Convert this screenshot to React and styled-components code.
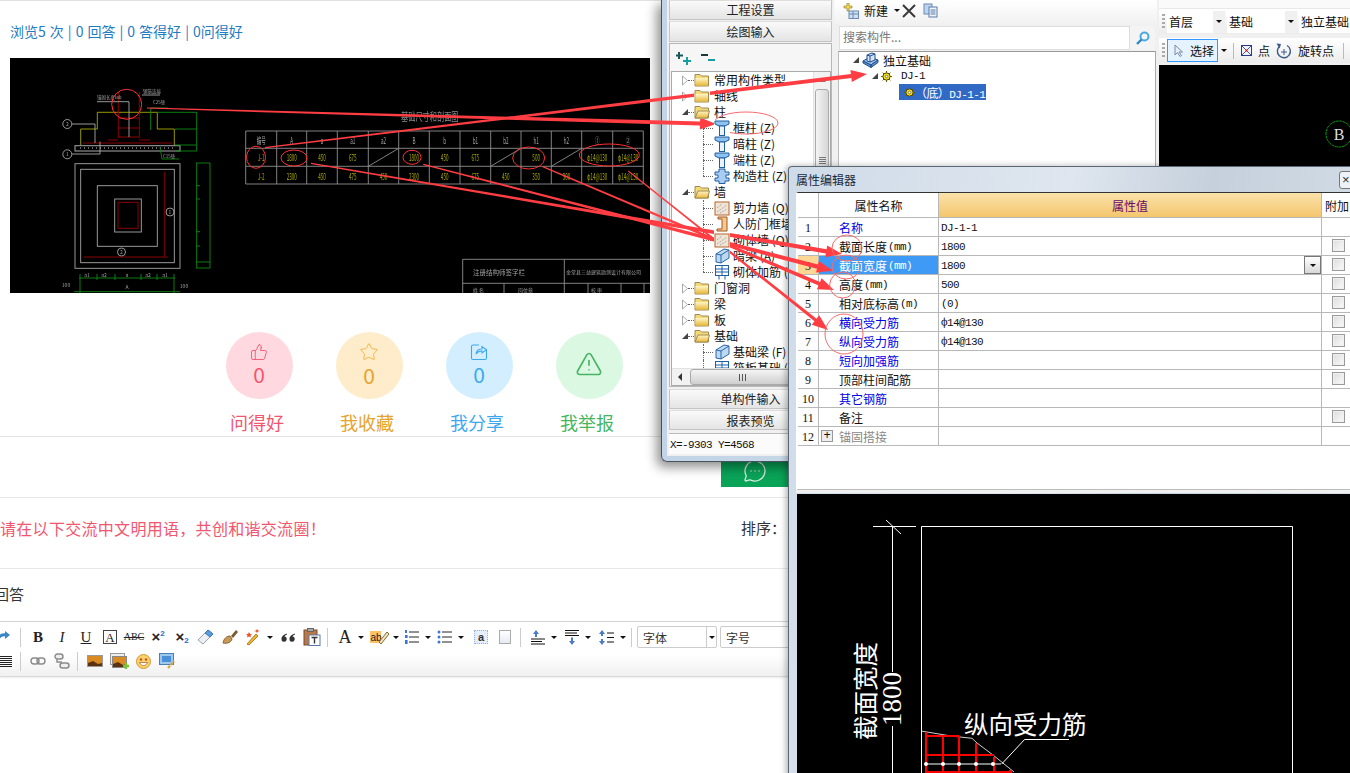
import React from 'react'
import styled, { createGlobalStyle } from 'styled-components'
import { ThumbsUp, Star, TriangleAlert, MessageCircleMore } from 'lucide-react'

const CJK = `"Noto Sans CJK SC", "Liberation Sans", sans-serif`
const OLD = `"Liberation Serif", "Noto Sans CJK SC", serif`
const MONO = `"Liberation Mono", "Noto Sans CJK SC", monospace`

const GlobalStyle = createGlobalStyle`
    html, body { margin: 0; padding: 0; background: #fff; }
    * { box-sizing: border-box; }
`

/* ---------- data ---------- */

const COLS = [245.7, 276.7, 306.7, 337.3, 368.3, 398.7, 429.3, 460, 490.7, 521, 551.3, 581.7, 612.7, 643.3]
const HEAD = ['编号', 'A', 'a', 'a1', 'a2', 'B', 'b', 'b1', 'b2', 'h1', 'h2', '①', '②']
const ROW_A = ['J-1', '1800', '450', '675', '', '1800', '450', '675', '', '500', '', 'φ14@130', 'φ14@130']
const ROW_B = ['J-2', '2300', '450', '475', '450', '2300', '450', '675', '450', '350', '300', 'φ14@130', 'φ14@130']

const ACTIONS = [
    { label: '问得好', count: '0', color: '#f2566f', bg: '#ffd9df', icon: 'like' },
    { label: '我收藏', count: '0', color: '#e6a32e', bg: '#ffeccb', icon: 'star' },
    { label: '我分享', count: '0', color: '#3ea8ef', bg: '#d3efff', icon: 'share' },
    { label: '我举报', color: '#46b562', bg: '#dbf8e3', icon: 'warn' },
]

const TREE = [
    { label: '常用构件类型', icon: 'folder' },
    { label: '轴线', icon: 'folder' },
    { label: '柱', icon: 'open' },
    { label: '框柱 (Z)', icon: 'column', child: true },
    { label: '暗柱 (Z)', icon: 'column', child: true },
    { label: '端柱 (Z)', icon: 'column', child: true },
    { label: '构造柱 (Z)', icon: 'puzzle', child: true, last: true },
    { label: '墙', icon: 'open' },
    { label: '剪力墙 (Q)', icon: 'wall', child: true },
    { label: '人防门框墙', icon: 'door', child: true },
    { label: '砌体墙 (Q)', icon: 'wall', child: true },
    { label: '暗梁 (A)', icon: 'beam', child: true },
    { label: '砌体加筋 (Y)', icon: 'rebar', child: true, last: true },
    { label: '门窗洞', icon: 'folder' },
    { label: '梁', icon: 'folder' },
    { label: '板', icon: 'folder' },
    { label: '基础', icon: 'open' },
    { label: '基础梁 (F)', icon: 'beam', child: true },
    { label: '筏板基础 (M)', icon: 'rebar', child: true },
]

const PROPS = [
    { n: '1', name: '名称', link: true, value: 'DJ-1-1' },
    { n: '2', name: '截面长度', unit: '(mm)', value: '1800', check: true },
    { n: '3', name: '截面宽度', unit: '(mm)', value: '1800', check: true, selected: true },
    { n: '4', name: '高度', unit: '(mm)', value: '500', check: true },
    { n: '5', name: '相对底标高', unit: '(m)', value: '(0)', check: true },
    { n: '6', name: '横向受力筋', link: true, value: 'ф14@130', check: true },
    { n: '7', name: '纵向受力筋', link: true, value: 'ф14@130', check: true },
    { n: '8', name: '短向加强筋', link: true, check: true },
    { n: '9', name: '顶部柱间配筋', check: true },
    { n: '10', name: '其它钢筋', link: true },
    { n: '11', name: '备注', check: true },
    { n: '12', name: '锚固搭接', muted: true, plus: true },
]

/* tapered arrows: start, tip, start width, end width */
const ARROWS = [
    [147, 108, 716, 124, 1.2, 4.2],
    [265, 147.7, 867, 74, 1.2, 4.2],
    [311, 163.3, 842, 254, 1.2, 4.2],
    [423.3, 164.3, 833, 270.7, 1.2, 4.2],
    [542.7, 166.7, 834, 290, 1.2, 3.6],
    [628.3, 171, 828, 330, 1, 3.2],
]

const RINGS = [
    [746, 123, 32, 11],
    [847, 248, 15, 13],
    [846, 267, 14, 12],
    [842.7, 285, 13, 13],
    [844, 334, 19, 20],
]

function arrowPoints([x1, y1, x2, y2, w1, w2]) {
    const len = Math.hypot(x2 - x1, y2 - y1)
    const dx = (x2 - x1) / len
    const dy = (y2 - y1) / len
    const nx = -dy
    const ny = dx
    const bx = x2 - dx * 16
    const by = y2 - dy * 16
    const pts = [
        [x1 + nx * w1 / 2, y1 + ny * w1 / 2],
        [bx + nx * w2 / 2, by + ny * w2 / 2],
        [bx + nx * 6, by + ny * 6],
        [x2, y2],
        [bx - nx * 6, by - ny * 6],
        [bx - nx * w2 / 2, by - ny * w2 / 2],
        [x1 - nx * w1 / 2, y1 - ny * w1 / 2],
    ]
    return pts.map((p) => p.map((v) => v.toFixed(1)).join(',')).join(' ')
}

/* ---------- small drawings ---------- */

function FolderIcon({ open }) {
    return (
        <svg width="16" height="14" viewBox="0 0 16 14">
            <defs>
                <linearGradient id="fold" x1="0" y1="0" x2="0" y2="1">
                    <stop offset="0" stopColor="#fff6c8" />
                    <stop offset="1" stopColor="#e8b83c" />
                </linearGradient>
            </defs>
            <path d="M1 3 L1 1.5 L6 1.5 L7.5 3 L14.5 3 L14.5 13 L1 13 Z" fill="#f3d97a" stroke="#a08a52" />
            {open
                ? <path d="M1 13 L4 6 L15.5 6 L13.5 13 Z" fill="url(#fold)" stroke="#a08a52" />
                : <rect x="1.5" y="5" width="12.5" height="7.5" fill="url(#fold)" />}
        </svg>
    )
}

function TreeIcon({ kind }) {
    if (kind === 'folder') return <FolderIcon />
    if (kind === 'open') return <FolderIcon open />
    if (kind === 'column') {
        return (
            <svg width="16" height="16" viewBox="0 0 16 16">
                <path d="M1 1 H15 V4 L11 6 H5 L1 4 Z" fill="#8ec2ee" stroke="#1e5fa8" />
                <rect x="5.5" y="6" width="5" height="9.5" fill="#e8f3fc" stroke="#1e5fa8" />
            </svg>
        )
    }
    if (kind === 'puzzle') {
        return (
            <svg width="16" height="16" viewBox="0 0 16 16">
                <path d="M5 1 H11 V4 H15 V7 H12 V10 H15 V13 H11 V15.5 H5 V13 H1 V10 H4 V7 H1 V4 H5 Z" fill="#a9cdf0" stroke="#1e5fa8" />
            </svg>
        )
    }
    if (kind === 'wall') {
        return (
            <svg width="16" height="16" viewBox="0 0 16 16">
                <rect x="1" y="2" width="14" height="13" fill="#efe4d6" stroke="#b4662e" />
                <path d="M3 12 L13 5 M6 13 L13 9 M3 8 L8 4" stroke="#9a9a9a" strokeDasharray="1 1" />
            </svg>
        )
    }
    if (kind === 'door') {
        return (
            <svg width="16" height="16" viewBox="0 0 16 16">
                <path d="M4 1 H13 V15 H3 V13 H8 V3 H4 Z" fill="#f2c98f" stroke="#a8541c" />
            </svg>
        )
    }
    if (kind === 'beam') {
        return (
            <svg width="16" height="16" viewBox="0 0 16 16">
                <path d="M2 6 L10 1 L15 2 L15 10 L7 15 L2 14 Z" fill="#bcd8f2" stroke="#2a66a8" />
                <path d="M2 6 L7 7 L15 2 M7 7 V15" fill="none" stroke="#2a66a8" />
            </svg>
        )
    }
    return (
        <svg width="16" height="16" viewBox="0 0 16 16" fill="none" stroke="#1e5fa8">
            <rect x="1.5" y="1.5" width="13" height="10" />
            <path d="M5 11.5 V15.5 M11 11.5 V15.5 M2 5 H14 M8 2 V11 M2 8 H14" />
        </svg>
    )
}

function Gear() {
    return (
        <svg width="11" height="11" viewBox="0 0 11 11">
            <circle cx="5.5" cy="5.5" r="3.6" fill="#f7e21e" stroke="#4a4200" />
            <path d="M5.5 0 V2 M5.5 9 V11 M0 5.5 H2 M9 5.5 H11 M1.6 1.6 L3 3 M8 8 L9.4 9.4 M9.4 1.6 L8 3 M3 8 L1.6 9.4" stroke="#6a5f00" />
            <circle cx="5.5" cy="5.5" r="1.3" fill="#fff" stroke="#4a4200" strokeWidth=".6" />
        </svg>
    )
}

function BaseIcon() {
    return (
        <svg width="17" height="16" viewBox="0 0 17 16">
            <path d="M1 9 L8 5 L16 8 L9 13 Z" fill="#9fc4ea" stroke="#234f8e" />
            <path d="M1 9 V11 L9 15.5 V13 Z M9 13 V15.5 L16 10.5 V8 Z" fill="#5f8fc8" stroke="#234f8e" />
            <path d="M5 3 L10 1 L13 2 V8 L8 10 L5 9 Z" fill="#d6e6f6" stroke="#234f8e" />
            <path d="M5 3 L8 4 L13 2 M8 4 V10" fill="none" stroke="#234f8e" />
        </svg>
    )
}

function Toggle({ open }) {
    return open
        ? <svg width="8" height="8" viewBox="0 0 8 8"><path d="M7 1 V7 H1 Z" fill="#444" /></svg>
        : <svg width="8" height="11" viewBox="0 0 8 11"><path d="M1.5 1 L6.5 5.5 L1.5 10 Z" fill="#fff" stroke="#aaa" /></svg>
}

function ShareIcon() {
    return (
        <svg width="18" height="18" viewBox="0 0 18 18" fill="none" stroke="#3ea8ef" strokeWidth="1.1">
            <path d="M9 2 H3 a1.5 1.5 0 0 0 -1.5 1.5 V15 a1.5 1.5 0 0 0 1.5 1.5 H15 a1.5 1.5 0 0 0 1.5 -1.5 V7" />
            <path d="M6 11 C6.5 7.5 9 6 12 6 V3.5 L16.5 6.8 L12 10 V8 C10 8 7.5 8.8 6 11 Z" />
        </svg>
    )
}

function ActionIcon({ kind }) {
    if (kind === 'like') return <ThumbsUp size={18} strokeWidth={1.2} color="#f2566f" />
    if (kind === 'star') return <Star size={20} strokeWidth={1.2} color="#f2b84b" />
    if (kind === 'share') return <ShareIcon />
    return <TriangleAlert size={28} strokeWidth={1.4} color="#46b562" />
}

function RedoIcon() {
    return (
        <svg width="14" height="14" viewBox="0 0 14 14" fill="none">
            <path d="M1 11 C1 6 5 4 10 5" stroke="#3a86c8" strokeWidth="3" />
            <path d="M8 1 L13 5 L8 9 Z" fill="#3a86c8" />
        </svg>
    )
}

function Eraser() {
    return (
        <svg width="18" height="18" viewBox="0 0 18 18">
            <path d="M1 12 L11 2 L16 6 L6 16 Z" fill="#eef0f2" stroke="#9aa3ad" />
            <path d="M8 5 L11 2 L16 6 L13 9 Z" fill="#5c9be0" stroke="#3a76b8" />
        </svg>
    )
}

function Brush() {
    return (
        <svg width="18" height="18" viewBox="0 0 18 18">
            <path d="M2 15 C3 10 6 8 9 8 L11 11 C10 14 7 16 2 15 Z" fill="#c89a5a" stroke="#8a6230" />
            <path d="M10 8 L15 2 L17 4 L12 10 Z" fill="#7a5a30" />
        </svg>
    )
}

function Wand() {
    return (
        <svg width="18" height="18" viewBox="0 0 18 18">
            <path d="M2 16 L11 6 L13 8 L4 17 Z" fill="#e8b43c" stroke="#b88018" />
            <path d="M4 4 L5 6 L7 6 L5.5 7.5 L6 9.5 L4 8.5 L2 9.5 L2.5 7.5 L1 6 L3 6 Z" fill="#e8532c" />
            <path d="M12 1 L13 2.5 L15 3 L13 3.6 L12 5 L11 3.6 L9 3 L11 2.5 Z" fill="#e8532c" />
        </svg>
    )
}

function QuoteIcon() {
    return (
        <svg width="15" height="9" viewBox="0 0 15 9" fill="#333">
            <path d="M6 0.5 C3 1.5 0.5 3 0.5 6 A2.6 2.6 0 1 0 3.5 3.6 C3.8 2.6 5 1.8 6 1.4 Z" />
            <path d="M14 0.5 C11 1.5 8.5 3 8.5 6 A2.6 2.6 0 1 0 11.5 3.6 C11.8 2.6 13 1.8 14 1.4 Z" />
        </svg>
    )
}

function Paste() {
    return (
        <svg width="18" height="18" viewBox="0 0 18 18">
            <rect x="1" y="2" width="13" height="15" fill="#b9784a" stroke="#7a4a28" />
            <rect x="4.5" y="0.5" width="6" height="3" fill="#a8a8a8" stroke="#666" />
            <rect x="6" y="7" width="11" height="10.5" fill="#fff" stroke="#5a7aa8" />
            <path d="M8.5 9.5 H14.5 M11.5 9.5 V15.5" stroke="#333" strokeWidth="1.4" />
        </svg>
    )
}

function Highlighter() {
    return (
        <svg width="20" height="16" viewBox="0 0 20 16">
            <rect x="0" y="2" width="11" height="12" fill="#ffc266" />
            <text x="0.5" y="11.5" fontFamily="Liberation Sans" fontSize="10" fill="#222">ab</text>
            <path d="M9 13 L17 3 L19 5 L11 15 Z" fill="#f0e4c0" stroke="#8a6a3a" />
        </svg>
    )
}

function OrderedList() {
    return (
        <svg width="16" height="16" viewBox="0 0 16 16">
            <path d="M5 3 H15 M5 8 H15 M5 13 H15" stroke="#222" />
            <rect x="1" y="1" width="2" height="3" fill="#3a76d8" />
            <rect x="1" y="6" width="2.6" height="3" fill="#3a76d8" />
            <rect x="1" y="11" width="2.6" height="4" fill="#3a76d8" />
        </svg>
    )
}

function BulletList() {
    return (
        <svg width="16" height="16" viewBox="0 0 16 16">
            <path d="M5 3 H15 M5 8 H15 M5 13 H15" stroke="#222" />
            <circle cx="2" cy="3" r="1.5" fill="#3a76d8" />
            <circle cx="2" cy="8" r="1.5" fill="#3a76d8" />
            <circle cx="2" cy="13" r="1.5" fill="#3a76d8" />
        </svg>
    )
}

function Spacing({ kind }) {
    if (kind === 'before') {
        return (
            <svg width="16" height="17" viewBox="0 0 16 17">
                <path d="M6 1 L9 5 H7 V8 H5 V5 H3 Z" fill="#4a7ac8" />
                <path d="M1 10 H15 M1 12.5 H12 M1 15 H15" stroke="#111" />
            </svg>
        )
    }
    if (kind === 'after') {
        return (
            <svg width="16" height="17" viewBox="0 0 16 17">
                <path d="M1 1.5 H15 M1 4 H13 M1 6.5 H15" stroke="#111" />
                <path d="M8 16 L11 12 H9 V8.5 H7 V12 H5 Z" fill="#4a7ac8" />
            </svg>
        )
    }
    return (
        <svg width="16" height="17" viewBox="0 0 16 17">
            <path d="M3 1 L6 5 H4 V7 H2 V5 H0 Z M3 16 L6 12 H4 V10 H2 V12 H0 Z" fill="#4a7ac8" />
            <path d="M8 4 H15 M8 8.5 H15 M8 13 H15" stroke="#111" />
        </svg>
    )
}

function Landscape() {
    return (
        <svg width="16" height="12" viewBox="0 0 16 12">
            <rect x=".5" y=".5" width="15" height="11" fill="#d98a22" stroke="#999" />
            <path d="M1 8 L6 6 L11 9 L15 8 V11 H1 Z" fill="#5a3210" />
        </svg>
    )
}

function Gallery() {
    return (
        <svg width="19" height="17" viewBox="0 0 19 17">
            <rect x=".5" y=".5" width="14" height="11" fill="#eee" stroke="#999" />
            <rect x="2.5" y="3.5" width="14" height="11" fill="#d98a22" stroke="#888" />
            <path d="M3 11 L8 9 L13 12 L16 11 V14 H3 Z" fill="#5a3210" />
            <path d="M13 13 H19 M16 10 V16" stroke="#7cc23c" strokeWidth="2.4" />
        </svg>
    )
}

function Smiley() {
    return (
        <svg width="15" height="15" viewBox="0 0 15 15">
            <circle cx="7.5" cy="7.5" r="7" fill="#fbd26a" stroke="#d09a3a" />
            <circle cx="5" cy="5.5" r="1.2" fill="#c2502a" />
            <circle cx="10" cy="5.5" r="1.2" fill="#c2502a" />
            <path d="M3.5 8.5 C5 12.5 10 12.5 11.5 8.5 Z" fill="#fff" stroke="#a85c2a" strokeWidth=".7" />
        </svg>
    )
}

function MapIcon() {
    return (
        <svg width="17" height="17" viewBox="0 0 17 17">
            <rect x=".5" y=".5" width="14" height="11" fill="#9fc8ee" stroke="#4a80b8" />
            <rect x="3" y="3" width="9" height="6" fill="#4a90d8" />
            <path d="M9 15 L15 8" stroke="#d8a848" strokeWidth="2.4" strokeDasharray="3 1" />
        </svg>
    )
}

function ChainIcon({ broken }) {
    if (broken) {
        return (
            <svg width="16" height="16" viewBox="0 0 16 16" fill="none" stroke="#8a8a8a" strokeWidth="1.4">
                <rect x="1" y="1" width="8" height="5" rx="2.5" fill="#eee" />
                <rect x="6" y="10" width="9" height="5" rx="2.5" fill="#eee" />
                <path d="M3 6 V9 H8" />
            </svg>
        )
    }
    return (
        <svg width="16" height="10" viewBox="0 0 16 10" fill="none" stroke="#8a8a8a" strokeWidth="1.4">
            <rect x="1" y="2" width="8" height="6" rx="3" />
            <rect x="7" y="2" width="8" height="6" rx="3" />
        </svg>
    )
}

/* ---------- CAD drawings ---------- */

function CadCell({ x, y, color, children }) {
    return (
        <text transform={`translate(${x} ${y}) scale(0.65 1.3)`} fill={color} textAnchor="middle">{children}</text>
    )
}

function CadSheet() {
    return (
        <CadSvg viewBox="10 58 640 235" preserveAspectRatio="none">
            <g fill="none" stroke="#a8a800" strokeWidth=".9">
                <path d="M80.7 145 V129 H97.3 V112.3 H157.3 V129 H174.3 V145" />
            </g>
            <rect x="75" y="145.7" width="105" height="5.3" fill="none" stroke="#aaa" />
            <path d="M80 148 H175" stroke="#ccc" strokeDasharray="1 3" />
            <g fill="none" stroke="#8b0000" strokeWidth="1">
                <path d="M83 143 H172 M118.3 92 V138 M139.3 92 V138 M118 118 H139 M118 128 H139 M118 137 H139 M108 140 H118 M139 140 H150" />
                <path d="M164.3 171.7 V257 M84 257 H168" />
                <rect x="118" y="202.3" width="20" height="26" />
            </g>
            <g fill="none" stroke="#a8a8a8" strokeWidth=".9">
                <rect x="75" y="163.7" width="105" height="104.6" />
                <rect x="80.7" y="169.3" width="93.6" height="93.4" />
                <rect x="97.3" y="185.7" width="60" height="60.6" />
                <rect x="114.7" y="199" width="26.6" height="33" />
                <path d="M97 101.7 H129 V137 M142 95 H160 M72 124 H95 V143 M72 154 H100 V141.7" />
                <circle cx="67.3" cy="124" r="4.5" />
                <circle cx="67.3" cy="154.3" r="4.5" />
                <circle cx="170" cy="212" r="4" />
                <circle cx="121.5" cy="252" r="4" />
            </g>
            <g fill="none" stroke="#0b8a14" strokeWidth=".9">
                <path d="M157 112.3 H196.7 V151 M175 129 H196.7 M175 145 H196.7 M175 151 H196.7" />
                <path d="M150.7 108 V130 M150.7 108 H168" />
                <path d="M196.7 163 V268 M210 163 V268 M196 163 H210 M196 185.7 H200 M196 199 H200 M196 231.7 H200 M196 246 H200 M196 262 H210 M196 268 H210" />
                <path d="M160 147 L162 159 H179" />
                <path d="M79 278 H175 M80 274 V293 M97 274 V280 M115 274 V280 M141 274 V280 M157 274 V280 M174 274 V293 M74 291.7 H180" />
            </g>
            <g fontFamily={CJK} fontSize="4.5" fill="#a0a0a0">
                <text x="97" y="99">锚固长度lab</text>
                <text x="143" y="93">钢筋连接</text>
                <text x="153" y="104">C25垫</text>
                <text x="163" y="158">C15垫</text>
            </g>
            <g fontFamily={CJK} fontSize="5" fill="#a0a0a0" textAnchor="middle">
                <text x="67.3" y="126">2</text>
                <text x="67.3" y="156">1</text>
                <text x="170" y="214">1</text>
                <text x="121.5" y="254">2</text>
                <text x="87" y="277">a1</text>
                <text x="104" y="277">a2</text>
                <text x="127" y="277">a</text>
                <text x="148" y="277">a2</text>
                <text x="165" y="277">a1</text>
                <text x="127" y="289">A</text>
                <text x="66" y="287">100</text>
                <text x="184" y="288">100</text>
            </g>

            <text transform="translate(401 121) scale(1 1.6)" fontFamily={CJK} fontSize="7.2" fill="#8a8a8a">基础尺寸和剖面图</text>
            <g fill="none" stroke="#8f8f8f" strokeWidth=".9">
                <path d="M245.7 131 H643.3 V184 H245.7 Z M245.7 148.3 H643.3 M245.7 166.3 H643.3" />
                {COLS.slice(1, -1).map((x) => <path key={x} d={`M${x} 131 V184`} />)}
                <path d="M368.3 166.3 L398.7 148.3 M490.7 166.3 L521 148.3 M551.3 166.3 L581.7 148.3" />
            </g>
            <g fontFamily={CJK} fontSize="7">
                {HEAD.map((t, i) => (
                    <CadCell key={t} x={(COLS[i] + COLS[i + 1]) / 2} y="144" color="#a0a0a0">{t}</CadCell>
                ))}
                {ROW_A.map((t, i) => (
                    <CadCell key={i} x={(COLS[i] + COLS[i + 1]) / 2} y="161" color="#a8a800">{t}</CadCell>
                ))}
                {ROW_B.map((t, i) => (
                    <CadCell key={i} x={(COLS[i] + COLS[i + 1]) / 2} y="180" color="#a8a800">{t}</CadCell>
                ))}
            </g>

            <g fill="none" stroke="#8f8f8f" strokeWidth=".9">
                <path d="M462.7 293 V259.3 H650 M462.7 283.3 H650 M564.3 259.3 V293 M504 283.3 V293 M588 283.3 V293 M621 283.3 V293 M644 283.3 V293" />
            </g>
            <g fontFamily={CJK} fill="#a0a0a0">
                <text x="473" y="275" fontSize="6.5">注册结构师签字栏</text>
                <text x="566" y="274" fontSize="5">金堂县三益建筑勘测设计有限公司</text>
                <text x="473" y="292" fontSize="5">姓 名</text>
                <text x="518" y="292" fontSize="5">岗位章</text>
                <text x="591" y="292" fontSize="5">校 审</text>
            </g>

            <g fill="none" stroke="#ff3030" strokeWidth="1">
                <circle cx="126.7" cy="104.3" r="15" />
                <ellipse cx="256" cy="157.3" rx="9.5" ry="11" />
                <ellipse cx="294" cy="158" rx="13" ry="8" />
                <ellipse cx="412" cy="157.3" rx="9" ry="7" />
                <ellipse cx="528.7" cy="158" rx="16" ry="11" />
                <ellipse cx="609.3" cy="155" rx="30" ry="11" />
            </g>
        </CadSvg>
    )
}

function PreviewCanvas() {
    return (
        <PreviewSvg viewBox="797 494 560 279">
            <g stroke="#fff" fill="none" strokeWidth="1">
                <path d="M921.5 773 V526.5 H1292.5 V773" />
                <path d="M873 526.5 H916 M886 520 L901 534 M892.5 526.5 V672 M892.5 726 V773" />
                <path d="M921 731 L951 736 L972 738.3 L977 743 L993 755 L1014 772" strokeWidth=".8" />
                <path d="M1069 739.5 H1024.6 L1001.7 764 M926 764 H1001" />
            </g>
            <g stroke="#ff0000" fill="none" strokeWidth="2">
                <path d="M926 732 V773 M943 735 V773 M959 736 V773 M976 743 V773 M994 757 V773 M1010 770 V773" />
                <path d="M926 736 H959 M926 755 H994 M926 772 H1012" />
            </g>
            <g fill="#fff">
                {[926, 943, 959, 976, 993].map((x) => <circle key={x} cx={x} cy="764" r="2" />)}
            </g>
            <g fontFamily={CJK} fill="#fff">
                <text x="964" y="734" fontSize="24.5">纵向受力筋</text>
                <text transform="translate(875 740) rotate(-90)" fontSize="24.5">截面宽度</text>
                <text transform="translate(901 726) rotate(-90)" fontSize="27" fontFamily={OLD}>1800</text>
            </g>
        </PreviewSvg>
    )
}

/* ---------- page ---------- */

export default function App() {
    return (
        <Page>
            <GlobalStyle />
            <Content>
                <Stats>浏览5 次 | 0 回答 | 0 答得好 | 0问得好</Stats>
                <CadSheet />
                <ActionRow>
                    {ACTIONS.map((a) => (
                        <Action key={a.label}>
                            <ActionCircle $bg={a.bg} $color={a.color}>
                                <ActionIcon kind={a.icon} />
                                {a.count && <Count>{a.count}</Count>}
                            </ActionCircle>
                            <ActionLabel $color={a.color}>{a.label}</ActionLabel>
                        </Action>
                    ))}
                </ActionRow>
                <ChatRow>
                    <ChatButton><MessageCircleMore size={24} strokeWidth={1.3} color="#d8efe2" /></ChatButton>
                </ChatRow>
                <NoticeRow>
                    <Notice>请在以下交流中文明用语，共创和谐交流圈！</Notice>
                    <Sort>排序：</Sort>
                </NoticeRow>
                <AnswerTitle>回答</AnswerTitle>
                <EditorBar>
                    <BarRow>
                        <RedoBox><RedoIcon /></RedoBox>
                        <BarSep />
                        <Tool $serif $bold>B</Tool>
                        <Tool $serif $italic>I</Tool>
                        <Tool $serif $under>U</Tool>
                        <Tool><BoxedA>A</BoxedA></Tool>
                        <Tool $serif $strike $small>ABC</Tool>
                        <Tool $bold>×<Sup>2</Sup></Tool>
                        <Tool $bold>×<Sub>2</Sub></Tool>
                        <Tool><Eraser /></Tool>
                        <Tool><Brush /></Tool>
                        <Tool><Wand /></Tool>
                        <Caret />
                        <Tool><QuoteIcon /></Tool>
                        <Tool><Paste /></Tool>
                        <BarSep />
                        <Tool $serif $big>A</Tool>
                        <Caret $mr={3} />
                        <Tool><Highlighter /></Tool>
                        <Caret $mr={0} />
                        <Tool><OrderedList /></Tool>
                        <Caret $mr={1} />
                        <Tool><BulletList /></Tool>
                        <Caret $mr={4} />
                        <Tool><AnchorBox>a</AnchorBox></Tool>
                        <Tool><PageSheet /></Tool>
                        <BarSep />
                        <Tool><Spacing kind="before" /></Tool>
                        <Caret />
                        <Tool><Spacing kind="after" /></Tool>
                        <Caret $mr={3} />
                        <Tool><Spacing kind="line" /></Tool>
                        <Caret $mr={1} />
                        <BarSep />
                        <FontSelect>
                            <span>字体</span>
                            <SelectArrow><Caret $mr={0} /></SelectArrow>
                        </FontSelect>
                        <FontSelect>
                            <span>字号</span>
                        </FontSelect>
                    </BarRow>
                    <BarRow>
                        <JustifyBox />
                        <BarSep />
                        <Tool><ChainIcon /></Tool>
                        <Tool><ChainIcon broken /></Tool>
                        <BarSep />
                        <Tool><Landscape /></Tool>
                        <Tool><Gallery /></Tool>
                        <Tool><Smiley /></Tool>
                        <Tool><MapIcon /></Tool>
                    </BarRow>
                </EditorBar>
            </Content>

            <MainWindow>
                <LeftPane>
                    <PaneTab $first>工程设置</PaneTab>
                    <PaneTab $tall>绘图输入</PaneTab>
                    <TreeBox>
                        <TreeTools>
                            <PlusMinus>
                                <svg width="40" height="15" viewBox="0 0 40 15">
                                    <path d="M3 1 V8 M0 4.5 H7" stroke="#1a5a5a" strokeWidth="2" />
                                    <path d="M11 6 V14 M7 10 H15" stroke="#14a0a0" strokeWidth="2" />
                                    <path d="M25 4 H32" stroke="#1a3a3a" strokeWidth="2" />
                                    <path d="M32 9 H39" stroke="#14a0a0" strokeWidth="2" />
                                </svg>
                            </PlusMinus>
                        </TreeTools>
                        <TreeList>
                            <TreeScroll>
                                {TREE.map((r) => (
                                    <TreeRow key={r.label} $child={r.child} $last={r.last}>
                                        {!r.child && <ToggleBox><Toggle open={r.icon === 'open'} /></ToggleBox>}
                                        <IconBox $child={r.child}><TreeIcon kind={r.icon} /></IconBox>
                                        <span>{r.label}</span>
                                    </TreeRow>
                                ))}
                            </TreeScroll>
                            <VScroll>
                                <ScrollArrow />
                                <VThumb><Grip /></VThumb>
                            </VScroll>
                            <HScroll>
                                <HArrow />
                                <HThumb><HGrip /></HThumb>
                            </HScroll>
                        </TreeList>
                    </TreeBox>
                    <PaneTab $low>单构件输入</PaneTab>
                    <PaneTab>报表预览</PaneTab>
                    <StatusLine>X=-9303 Y=4568</StatusLine>
                </LeftPane>

                <MidPane>
                    <MidToolbar>
                        <svg width="16" height="16" viewBox="0 0 16 16">
                            <path d="M4 0 H6 V3 H9 V5 H6 V8 H4 V5 H1 V3 H4 Z" fill="#f2d85a" stroke="#8a7a20" strokeWidth=".6" />
                            <rect x="6" y="8" width="9.5" height="7.5" fill="#cfe0f2" stroke="#6a8ab0" />
                            <path d="M6 11 H15 M10 8 V15" stroke="#6a8ab0" />
                        </svg>
                        <MidLabel>新建</MidLabel>
                        <Caret $mr={1} />
                        <svg width="14" height="14" viewBox="0 0 14 14">
                            <path d="M1 1 L13 13 M13 1 L1 13" stroke="#3a3a3a" strokeWidth="2" />
                        </svg>
                        <CopyGap>
                            <svg width="15" height="15" viewBox="0 0 15 15">
                                <rect x="1" y="1" width="8" height="10" fill="#bcd6f0" stroke="#6a8ab0" />
                                <rect x="6" y="4" width="8" height="10" fill="#eef5fc" stroke="#5a7aa8" />
                                <path d="M7.5 7 H12.5 M7.5 9 H12.5 M7.5 11 H12.5" stroke="#5a7aa8" />
                            </svg>
                        </CopyGap>
                    </MidToolbar>
                    <SearchRow>
                        <SearchInput>搜索构件...</SearchInput>
                        <SearchBtn>
                            <svg width="14" height="14" viewBox="0 0 14 14" fill="none">
                                <circle cx="8.5" cy="5.5" r="4" stroke="#4aa8e0" strokeWidth="2" />
                                <path d="M5.5 8.5 L1 13" stroke="#2a88c8" strokeWidth="2.4" />
                            </svg>
                        </SearchBtn>
                    </SearchRow>
                    <PartTree>
                        <PartRow $indent={13}>
                            <ToggleBox><Toggle open /></ToggleBox>
                            <PartIcon><BaseIcon /></PartIcon>
                            <span>独立基础</span>
                        </PartRow>
                        <PartRow $indent={32}>
                            <ToggleBox><Toggle open /></ToggleBox>
                            <PartIcon><Gear /></PartIcon>
                            <MonoText>DJ-1</MonoText>
                        </PartRow>
                        <PartRow $indent={60}>
                            <Highlight>
                                <Gear />
                                <span>（底）<MonoText>DJ-1-1</MonoText></span>
                            </Highlight>
                        </PartRow>
                    </PartTree>
                </MidPane>

                <RightPane>
                    <RightTop />
                    <StripRow>
                        <GripDots />
                        <Combo $w={58}>首层<ComboBtn><Caret $mr={0} /></ComboBtn></Combo>
                        <Combo $w={70}>基础<ComboBtn><Caret $mr={0} /></ComboBtn></Combo>
                        <Combo $w={70}>独立基础</Combo>
                    </StripRow>
                    <StripRow>
                        <GripDots />
                        <SelectBtn>
                            <svg width="10" height="13" viewBox="0 0 10 13">
                                <path d="M1 1 V11 L3.5 8.5 L6 12.5 L7.5 11.5 L5 8 H8.5 Z" fill="#e8eef6" stroke="#7a8aa8" />
                            </svg>
                            选择
                        </SelectBtn>
                        <Caret $mr={0} />
                        <StripSep />
                        <svg width="11" height="11" viewBox="0 0 11 11">
                            <rect x=".5" y=".5" width="10" height="10" fill="#eef2fa" stroke="#2a3a88" />
                            <path d="M1 1 L10 10 M10 1 L1 10" stroke="#4a5aa8" />
                            <circle cx="5.5" cy="5.5" r="1" fill="#e01818" />
                        </svg>
                        <StripText>点</StripText>
                        <svg width="16" height="16" viewBox="0 0 16 16" fill="none">
                            <path d="M4 3 A6.5 6.5 0 1 0 11 2.5" stroke="#3a5a8a" strokeWidth="1.4" />
                            <path d="M0.5 0.5 L5 1 L3.5 5.5 Z" fill="#3a5a8a" />
                            <path d="M8 6 V12 M5 9 H11" stroke="#3a5a8a" />
                        </svg>
                        <StripText>旋转点</StripText>
                        <StripSep />
                    </StripRow>
                    <BlackView>
                        <svg width="191" height="100" viewBox="1159 66 191 100">
                            <circle cx="1339" cy="135" r="13" fill="none" stroke="#0a9a0a" strokeDasharray="3 .6" />
                            <text x="1339" y="141" textAnchor="middle" fontFamily={OLD} fontSize="16" fill="#ddd">B</text>
                        </svg>
                    </BlackView>
                </RightPane>
            </MainWindow>

            <EditorWindow>
                <TitleBar>
                    属性编辑器
                    <CloseBox>×</CloseBox>
                </TitleBar>
                <PropGrid>
                    <HeadCell $corner />
                    <HeadCell>属性名称</HeadCell>
                    <HeadCell $value>属性值</HeadCell>
                    <HeadCell $extra>附加</HeadCell>
                    {PROPS.map((p) => (
                        <React.Fragment key={p.n}>
                            <NumCell $selected={p.selected}>{p.n}</NumCell>
                            <NameCell $link={p.link} $muted={p.muted} $selected={p.selected}>
                                {p.plus && <PlusBox>+</PlusBox>}
                                {p.name}
                                {p.unit && <Unit>{p.unit}</Unit>}
                            </NameCell>
                            <ValueCell>
                                {p.value}
                                {p.selected && <DropBtn><Caret $mr={0} /></DropBtn>}
                            </ValueCell>
                            <CheckCell>{p.check && <CheckBox />}</CheckCell>
                        </React.Fragment>
                    ))}
                </PropGrid>
                <PreviewGap />
                <PreviewCanvas />
            </EditorWindow>

            <ArrowLayer viewBox="0 0 1350 773">
                {ARROWS.map((a) => <polygon key={a[2]} points={arrowPoints(a)} fill="#ff3d42" />)}
                {RINGS.map((r) => (
                    <ellipse key={r[0]} cx={r[0]} cy={r[1]} rx={r[2]} ry={r[3]} fill="none" stroke="#f76a6e" />
                ))}
            </ArrowLayer>
        </Page>
    )
}

const Page = styled.div`
    position: relative;
    width: 1350px;
    height: 773px;
    overflow: hidden;
    background: #fff;
    font-family: ${CJK};
`

const Content = styled.div`
    display: flex;
    flex-direction: column;
    border-top: 1px solid #e2e2e2;
`

const Stats = styled.div`
    height: 57px;
    padding: 20px 0 0 10px;
    font-size: 14px;
    line-height: 20px;
    word-spacing: 0.9px;
    color: #1f7cc2;
`

const CadSvg = styled.svg`
    display: block;
    width: 640px;
    height: 235px;
    margin-left: 10px;
    background: #000;
    filter: blur(0.55px);
    flex: none;
`

const ActionRow = styled.div`
    display: flex;
    height: 144px;
    padding: 39px 0 0 202px;
    border-bottom: 1px solid #e3e3e3;
`

const Action = styled.div`
    width: 110px;
    display: flex;
    flex-direction: column;
    align-items: center;
`

const ActionCircle = styled.div`
    width: 67px;
    height: 67px;
    margin-left: 4px;
    padding-bottom: 3px;
    border-radius: 50%;
    background: ${(p) => p.$bg};
    color: ${(p) => p.$color};
    display: flex;
    flex-direction: column;
    align-items: center;
    justify-content: center;
`

const Count = styled.div`
    font-size: 21px;
    line-height: 24px;
    margin-top: 1px;
`

const ActionLabel = styled.div`
    margin-top: 11px;
    font-size: 18px;
    line-height: 24px;
    color: ${(p) => p.$color};
`

const ChatRow = styled.div`
    height: 61px;
    padding-left: 721px;
    border-bottom: 1px solid #e8e8e8;
`

const ChatButton = styled.div`
    width: 90px;
    height: 50px;
    background: #0aa458;
    display: flex;
    align-items: flex-end;
    padding: 0 0 4px 22px;
`

const NoticeRow = styled.div`
    height: 71px;
    padding-top: 19px;
    display: flex;
    border-bottom: 1px solid #e8e8e8;
`

const Notice = styled.div`
    width: 741px;
    font-size: 16px;
    line-height: 22px;
    letter-spacing: 0.3px;
    color: #f2566f;
`

const Sort = styled.div`
    font-size: 15px;
    line-height: 22px;
    color: #333;
`

const AnswerTitle = styled.div`
    height: 52px;
    margin-left: -6px;
    padding-top: 14px;
    font-size: 15px;
    line-height: 22px;
    color: #333;
`

const EditorBar = styled.div`
    height: 56px;
    padding-top: 3px;
    border-top: 1px solid #d4d4d4;
    border-bottom: 1px solid #d8d8d8;
    background: linear-gradient(#fff, #fff 60%, #f0f0f0);
    box-shadow: 0 1px 2px rgba(0, 0, 0, 0.08);
`

const BarRow = styled.div`
    display: flex;
    align-items: center;
    height: 24px;
`

const RedoBox = styled.div`
    width: 20px;
    margin-left: -3px;
    flex: none;
    display: flex;
    align-items: center;
`

const BarSep = styled.div`
    flex: none;
    width: 1px;
    height: 19px;
    background: #ccc;
    margin: 0 5px 0 3px;
`

const Tool = styled.div`
    flex: none;
    width: 24px;
    height: 24px;
    display: flex;
    align-items: center;
    justify-content: center;
    color: #222;
    font-family: ${(p) => (p.$serif ? '"Liberation Serif", serif' : '"Liberation Sans", sans-serif')};
    font-size: ${(p) => (p.$small ? '10px' : p.$big ? '18px' : '15px')};
    font-weight: ${(p) => (p.$bold ? 700 : 400)};
    font-style: ${(p) => (p.$italic ? 'italic' : 'normal')};
    text-decoration: ${(p) => (p.$under ? 'underline' : p.$strike ? 'line-through' : 'none')};
    line-height: 24px;
`

const Sup = styled.span`
    font-size: 8px;
    color: #2a66d8;
    margin-top: -7px;
`

const Sub = styled.span`
    font-size: 8px;
    color: #2a66d8;
    margin-top: 7px;
`

const BoxedA = styled.span`
    display: block;
    width: 14px;
    height: 14px;
    border: 1px solid #444;
    font: 13px/13px "Liberation Serif", serif;
    text-align: center;
`

const AnchorBox = styled.span`
    display: block;
    width: 14px;
    height: 14px;
    border: 1px dotted #8fb0e8;
    background: #e6eefb;
    font: 700 11px/12px "Liberation Sans", sans-serif;
    text-align: center;
    color: #333;
`

const PageSheet = styled.span`
    display: block;
    width: 12px;
    height: 14px;
    border: 1px solid #aaa;
    background: linear-gradient(#fff, #e6eaf2);
`

const Caret = styled.span`
    flex: none;
    display: inline-block;
    box-sizing: content-box;
    width: 0;
    height: 0;
    margin: 0 ${(p) => (p.$mr ?? 2) + 1}px 0 1px;
    border-top: 3px solid #111;
    border-left: 3px solid transparent;
    border-right: 3px solid transparent;
`

const FontSelect = styled.div`
    flex: none;
    width: 80px;
    height: 22px;
    margin-right: 3px;
    border: 1px solid #ccc;
    border-radius: 2px;
    background: #fff;
    display: flex;
    align-items: center;
    justify-content: space-between;
    padding-left: 5px;
    font-size: 12px;
    color: #333;
`

const SelectArrow = styled.div`
    width: 10px;
    height: 100%;
    border-left: 1px solid #ccc;
    display: flex;
    align-items: center;
    justify-content: center;
`

const JustifyBox = styled.div`
    flex: none;
    width: 12px;
    height: 11px;
    margin-right: 5px;
    background: repeating-linear-gradient(#222 0 1px, transparent 1px 2px);
`

const MainWindow = styled.div`
    position: absolute;
    left: 661px;
    top: 0;
    width: 760px;
    height: 462px;
    display: flex;
    padding: 0 0 5px 5px;
    background: linear-gradient(90deg, #c2d4e6, #d7e4f0);
    border: 1px solid #46525e;
    border-top: 0;
    border-radius: 0 0 0 6px;
    box-shadow: -4px 5px 12px rgba(0, 0, 0, 0.45);
    font-size: 12px;
    color: #111;
`

const LeftPane = styled.div`
    flex: none;
    width: 167px;
    padding-left: 2px;
    background: #f0f0f0;
    display: flex;
    flex-direction: column;
    font-family: ${OLD};
`

const PaneTab = styled.div`
    flex: none;
    width: 163px;
    height: ${(p) => (p.$tall ? 21 : 20)}px;
    margin-bottom: 1px;
    padding-bottom: ${(p) => (p.$first || p.$low ? 2 : 0)}px;
    border: 1px solid #c4c4c4;
    border-top-color: #ddd;
    background: linear-gradient(#fafafa, #e4e4e4);
    display: flex;
    align-items: center;
    justify-content: center;
    font-family: ${CJK};
    color: #222;
`

const TreeBox = styled.div`
    flex: none;
    width: 163px;
    height: 344px;
    margin-bottom: 2px;
    border: 1px solid #b8b8b8;
    background: #f6f6f6;
    display: flex;
    flex-direction: column;
`

const TreeTools = styled.div`
    height: 27px;
    padding: 7px 0 0 6px;
`

const PlusMinus = styled.div`
    line-height: 0;
`

const TreeList = styled.div`
    position: relative;
    flex: 1;
    margin-left: 1px;
    background: #fff;
    border: 1px solid #aaa;
    overflow: hidden;
`

const TreeScroll = styled.div`
    height: 296px;
    overflow: hidden;
    font-family: ${CJK};
`

const TreeRow = styled.div`
    position: relative;
    height: 16px;
    display: flex;
    align-items: center;
    padding-left: ${(p) => (p.$child ? 42 : 9)}px;
    line-height: 16px;
    white-space: nowrap;

    &::before {
        content: '';
        position: absolute;
        left: ${(p) => (p.$child ? 31 : 16)}px;
        top: ${(p) => (p.$child ? '0' : '8px')};
        width: ${(p) => (p.$child ? 10 : 6)}px;
        height: ${(p) => (p.$child ? (p.$last ? '8px' : '100%') : '0')};
        border-left: ${(p) => (p.$child ? '1px dotted #666' : '0')};
        border-bottom: ${(p) => (p.$child ? '0' : '1px dotted #666')};
    }

    &::after {
        content: '';
        display: ${(p) => (p.$child ? 'block' : 'none')};
        position: absolute;
        left: 31px;
        top: 8px;
        width: 10px;
        border-top: 1px dotted #666;
    }
`

const ToggleBox = styled.span`
    flex: none;
    width: 8px;
    margin-right: 5px;
    display: flex;
    align-items: center;
    justify-content: center;
    line-height: 0;
`

const IconBox = styled.span`
    flex: none;
    width: 16px;
    margin-right: ${(p) => (p.$child ? 3 : 4)}px;
    display: flex;
    line-height: 0;
    position: relative;
    z-index: 1;
    background: #fff;
`

const VScroll = styled.div`
    position: absolute;
    top: 0;
    right: 0;
    width: 17px;
    height: 296px;
    background: #f2f2f2;
    border-left: 1px solid #e2e2e2;
`

const ScrollArrow = styled.div`
    height: 17px;
    position: relative;

    &::after {
        content: '';
        position: absolute;
        left: 4px;
        top: 6px;
        border-left: 4px solid transparent;
        border-right: 4px solid transparent;
        border-bottom: 4px solid #777;
    }
`

const VThumb = styled.div`
    height: 250px;
    margin: 0 1px;
    border: 1px solid #aaa;
    border-radius: 3px;
    background: linear-gradient(90deg, #f4f4f4, #d6d6d6);
    display: flex;
    align-items: flex-start;
    justify-content: center;
    padding-top: 67px;
`

const Grip = styled.div`
    width: 7px;
    height: 7px;
    background: repeating-linear-gradient(#777 0 1px, transparent 1px 2px);
`

const HScroll = styled.div`
    height: 17px;
    display: flex;
    background: #f2f2f2;
    border-top: 1px solid #e2e2e2;
`

const HArrow = styled.div`
    flex: none;
    width: 18px;
    position: relative;

    &::after {
        content: '';
        position: absolute;
        left: 6px;
        top: 4px;
        border-top: 4px solid transparent;
        border-bottom: 4px solid transparent;
        border-right: 4px solid #333;
    }
`

const HThumb = styled.div`
    width: 105px;
    border: 1px solid #aaa;
    border-radius: 3px;
    background: linear-gradient(#f4f4f4, #cfcfcf);
    display: flex;
    align-items: center;
    justify-content: center;
`

const HGrip = styled.div`
    width: 8px;
    height: 7px;
    background: repeating-linear-gradient(90deg, #555 0 1px, transparent 1px 3px);
`

const StatusLine = styled.div`
    margin-top: 2px;
    height: 21px;
    width: 163px;
    padding-left: 1px;
    border-top: 1px solid #bbb;
    font: 11px/23px ${MONO};
    letter-spacing: -0.6px;
    background: #fbfbfb;
`

const MidPane = styled.div`
    flex: none;
    width: 323px;
    background: #f0f0f0;
    display: flex;
    flex-direction: column;
    font-family: ${CJK};
`

const MidToolbar = styled.div`
    height: 26px;
    padding: 0 0 5px 9px;
    display: flex;
    align-items: center;
    background: linear-gradient(#fff, #f0f0f0);
`

const MidLabel = styled.span`
    margin: 0 5px;
`

const CopyGap = styled.span`
    margin-left: 7px;
    line-height: 0;
`

const SearchRow = styled.div`
    height: 25px;
    margin-left: 5px;
    display: flex;
`

const SearchInput = styled.div`
    flex: none;
    width: 291px;
    height: 24px;
    padding-left: 3px;
    background: #fff;
    border: 1px solid #ddd;
    font-size: 12px;
    line-height: 19px;
    color: #777;
`

const SearchBtn = styled.div`
    flex: none;
    width: 25px;
    height: 24px;
    display: flex;
    align-items: center;
    justify-content: center;
    background: #f4f4f4;
`

const PartTree = styled.div`
    flex: 1;
    margin-left: 4px;
    width: 318px;
    border-top: 1px solid #999;
    border-left: 1px solid #bbb;
    border-right: 1px solid #aaa;
    background: #fff;
`

const PartRow = styled.div`
    height: 16px;
    display: flex;
    align-items: center;
    padding-left: ${(p) => p.$indent}px;
    white-space: nowrap;
`

const PartIcon = styled.span`
    margin: 0 4px 0 -3px;
    line-height: 0;
    display: flex;
`

const MonoText = styled.span`
    font-family: ${MONO};
    font-size: 11px;
    letter-spacing: -0.6px;
    margin-left: 5px;
`

const Highlight = styled.div`
    width: 87px;
    height: 16px;
    padding-left: 5px;
    display: flex;
    align-items: center;
    background: #316ac5;
    color: #fff;

    span {
        margin: 0;
        letter-spacing: -0.6px;
        color: #fff;
    }
`

const RightPane = styled.div`
    flex: 1;
    padding-left: 2px;
    background: #f0f0f0;
    display: flex;
    flex-direction: column;
    font-family: ${CJK};
`

const RightTop = styled.div`
    height: 9px;
    border-bottom: 1px solid #e8e8e8;
    background: #fafafa;
`

const StripRow = styled.div`
    height: 25px;
    margin-bottom: 4px;
    display: flex;
    align-items: center;
    gap: 2px;
    background: linear-gradient(#fff, #ececec);
`

const GripDots = styled.span`
    flex: none;
    width: 3px;
    height: 16px;
    margin: 0 0 0 3px;
    background: repeating-linear-gradient(#aaa 0 2px, transparent 2px 4px);
`

const Combo = styled.div`
    flex: none;
    position: relative;
    width: ${(p) => p.$w}px;
    height: 22px;
    padding-left: 2px;
    background: #fff;
    line-height: 22px;
    white-space: nowrap;
`

const ComboBtn = styled.span`
    position: absolute;
    right: 0;
    top: 0;
    width: 12px;
    height: 22px;
    background: #f0f0f0;
    display: flex;
    align-items: center;
    justify-content: center;
`

const SelectBtn = styled.div`
    flex: none;
    width: 51px;
    height: 23px;
    padding-left: 6px;
    display: flex;
    align-items: center;
    gap: 6px;
    border: 1px solid #3399ff;
    background: #e5f3ff;
`

const StripSep = styled.span`
    flex: none;
    width: 1px;
    height: 16px;
    background: #bbb;
    margin: 0 5px 0 3px;
`

const StripText = styled.span`
    margin: 0 4px;
`

const BlackView = styled.div`
    flex: 1;
    margin-top: -2px;
    background: #000;
    line-height: 0;
`

const EditorWindow = styled.div`
    position: absolute;
    left: 788px;
    top: 166px;
    width: 600px;
    height: 640px;
    padding: 0 0 0 7px;
    display: flex;
    flex-direction: column;
    background: linear-gradient(100deg, #cfdbe8, #dfe6ef 40%, #c5d0dc 60%, #dde5ee);
    border: 1px solid #5a6876;
    border-right: 0;
    border-radius: 4px 0 0 0;
    box-shadow: -2px 0 6px rgba(0, 0, 0, 0.3);
    font-family: ${CJK};
    font-size: 12px;
    color: #111;
`

const TitleBar = styled.div`
    position: relative;
    flex: none;
    height: 25px;
    line-height: 25px;
    color: #1a2a3a;
`

const CloseBox = styled.span`
    position: absolute;
    right: 29px;
    top: 4px;
    width: 20px;
    height: 18px;
    border: 1px solid #777;
    border-radius: 3px;
    background: #eef2f6;
    font: 13px/15px "Liberation Sans", sans-serif;
    padding-left: 2px;
    color: #333;
`

const PropGrid = styled.div`
    flex: none;
    display: grid;
    grid-template-columns: 21px 120px 383px 1fr;
    grid-template-rows: 25px repeat(12, 19px);
    background: #fff;
    border-top: 1px solid #333;
    border-left: 2px solid #fff;
`

const cellLine = `
    border-bottom: 1px solid #b8b8b8;
    border-right: 1px solid #b8b8b8;
`

const HeadCell = styled.div`
    ${cellLine}
    display: flex;
    align-items: center;
    justify-content: ${(p) => (p.$extra ? 'flex-start' : 'center')};
    padding-left: ${(p) => (p.$extra ? 3 : 0)}px;
    color: ${(p) => (p.$value ? '#6a0a6a' : '#111')};
    background: ${(p) => (p.$value ? 'linear-gradient(#fbe2ab, #f3c66d)' : '#fff')};
`

const NumCell = styled.div`
    ${cellLine}
    text-align: center;
    line-height: 20px;
    font-family: ${OLD};
    background: ${(p) => (p.$selected ? '#ffd795' : '#fdfdfd')};
`

const NameCell = styled.div`
    ${cellLine}
    display: flex;
    align-items: center;
    padding: 1px 0 0 20px;
    position: relative;
    white-space: nowrap;
    color: ${(p) => (p.$selected ? '#fff' : p.$link ? '#0000e6' : p.$muted ? '#888' : '#111')};
    background: ${(p) => (p.$selected ? '#3f9af5' : '#fff')};
`

const Unit = styled.span`
    font-family: ${MONO};
    font-size: 11px;
    letter-spacing: -0.6px;
    margin-left: 1px;
`

const PlusBox = styled.span`
    position: absolute;
    left: 2px;
    top: 3px;
    width: 12px;
    height: 12px;
    border: 1px solid #999;
    background: #eee;
    color: #111;
    font: 12px/10px "Liberation Mono", monospace;
    text-align: center;
`

const ValueCell = styled.div`
    ${cellLine}
    position: relative;
    padding-left: 2px;
    font-family: ${MONO};
    font-size: 11px;
    letter-spacing: -0.6px;
    line-height: 20px;
`

const DropBtn = styled.span`
    position: absolute;
    right: 0;
    top: 0;
    width: 17px;
    height: 18px;
    border: 1px solid #777;
    background: linear-gradient(#fff, #d8d8d8);
    display: flex;
    align-items: center;
    justify-content: center;
    letter-spacing: 0;
`

const CheckCell = styled.div`
    border-bottom: 1px solid #b8b8b8;
    padding: 2px 0 0 10px;
`

const CheckBox = styled.span`
    display: block;
    width: 13px;
    height: 13px;
    border: 1px solid #9a9a9a;
    background: linear-gradient(135deg, #dcdcdc, #fbfbfb);
    box-shadow: inset 0 0 0 1px #f0f0f0;
`

const PreviewGap = styled.div`
    flex: none;
    height: 44px;
    background: #fff;
    border-left: 2px solid #fff;
    border-bottom: 1px solid #bbb;
    box-shadow: 0 3px 0 #f0f0f0;
`

const PreviewSvg = styled.svg`
    display: block;
    flex: none;
    width: 560px;
    height: 279px;
    margin: 4px 0 0 1px;
    background: #000;
`

const ArrowLayer = styled.svg`
    position: absolute;
    left: 0;
    top: 0;
    width: 1350px;
    height: 773px;
    pointer-events: none;
`
